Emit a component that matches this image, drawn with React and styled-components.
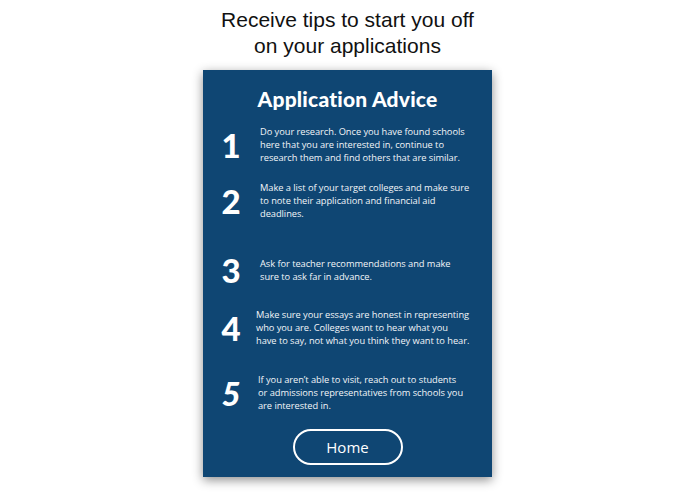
import React from "react";
import styled, { createGlobalStyle } from "styled-components";

const GlobalStyle = createGlobalStyle`
  html, body {
    margin: 0;
    padding: 0;
    background: #ffffff;
  }
  body {
    font-family: "Liberation Sans", Arial, sans-serif;
  }
`;

const Page = styled.div`
  width: 695px;
  height: 494px;
  display: flex;
  flex-direction: column;
  align-items: center;
  box-sizing: border-box;
  padding-top: 7px;
`;

const Heading = styled.h1`
  margin: 0;
  font-family: "Liberation Sans", Arial, sans-serif;
  font-weight: 400;
  font-size: 21px;
  line-height: 26px;
  color: #111;
  text-align: center;
`;

const Card = styled.div`
  margin-top: 11px;
  width: 289px;
  height: 407px;
  background: #0f4673;
  box-shadow: 0 3px 10px rgba(0, 0, 0, 0.45);
  display: flex;
  flex-direction: column;
  align-items: stretch;
  box-sizing: border-box;
  padding-top: 16px;
  color: #ffffff;
`;

const CardTitle = styled.h2`
  margin: 0;
  font-family: Lato, "Open Sans", sans-serif;
  font-weight: 900;
  font-size: 21px;
  line-height: 26px;
  text-align: center;
  letter-spacing: 0.2px;
`;

const List = styled.ol`
  list-style: none;
  margin: 0;
  padding: 0;
  display: flex;
  flex-direction: column;
`;

const Item = styled.li`
  display: flex;
  align-items: center;
  margin-top: ${(p) => p.$gap}px;
`;

const Num = styled.span`
  width: 36px;
  margin-left: 10px;
  flex: none;
  text-align: center;
  font-family: Lato, "Open Sans", sans-serif;
  font-weight: 900;
  font-size: 33px;
  line-height: 34px;
  font-style: ${(p) => (p.$italic ? "italic" : "normal")};
`;

const Text = styled.p`
  margin: 0 0 0 ${(p) => p.$indent}px;
  font-family: "Open Sans", Lato, sans-serif;
  font-size: 9.3px;
  line-height: 13px;
  letter-spacing: -0.05px;
  color: #f2f5f8;
`;

const Line = styled.span`
  display: block;
  white-space: nowrap;
`;

const HomeButton = styled.button`
  align-self: center;
  margin-top: 17px;
  width: 110px;
  height: 36px;
  border: 2px solid #ffffff;
  border-radius: 18px;
  background: transparent;
  color: #ffffff;
  font-family: "Open Sans", Lato, sans-serif;
  font-size: 15px;
  cursor: pointer;
`;

const tips = [
  {
    n: "1",
    gap: 13,
    indent: 11,
    lines: [
      "Do your research. Once you have found schools",
      "here that you are interested in, continue to",
      "research them and find others that are similar.",
    ],
  },
  {
    n: "2",
    gap: 17,
    indent: 11,
    lines: [
      "Make a list of your target colleges and make sure",
      "to note their application and financial aid",
      "deadlines.",
    ],
  },
  {
    n: "3",
    gap: 33,
    indent: 11,
    lines: [
      "Ask for teacher recommendations and make",
      "sure to ask far in advance.",
    ],
  },
  {
    n: "4",
    gap: 21,
    indent: 7,
    lines: [
      "Make sure your essays are honest in representing",
      "who you are. Colleges want to hear what you",
      "have to say, not what you think they want to hear.",
    ],
  },
  {
    n: "5",
    gap: 26,
    indent: 9,
    italic: true,
    lines: [
      "If you aren\u2019t able to visit, reach out to students",
      "or admissions representatives from schools you",
      "are interested in.",
    ],
  },
];

export default function App() {
  return (
    <>
      <GlobalStyle />
      <Page>
        <Heading>
          Receive tips to start you off
          <br />
          on your applications
        </Heading>
        <Card>
          <CardTitle>Application Advice</CardTitle>
          <List>
            {tips.map((t) => (
              <Item key={t.n} $gap={t.gap}>
                <Num $italic={t.italic}>{t.n}</Num>
                <Text $indent={t.indent}>
                  {t.lines.map((l) => (
                    <Line key={l}>{l}</Line>
                  ))}
                </Text>
              </Item>
            ))}
          </List>
          <HomeButton>Home</HomeButton>
        </Card>
      </Page>
    </>
  );
}
